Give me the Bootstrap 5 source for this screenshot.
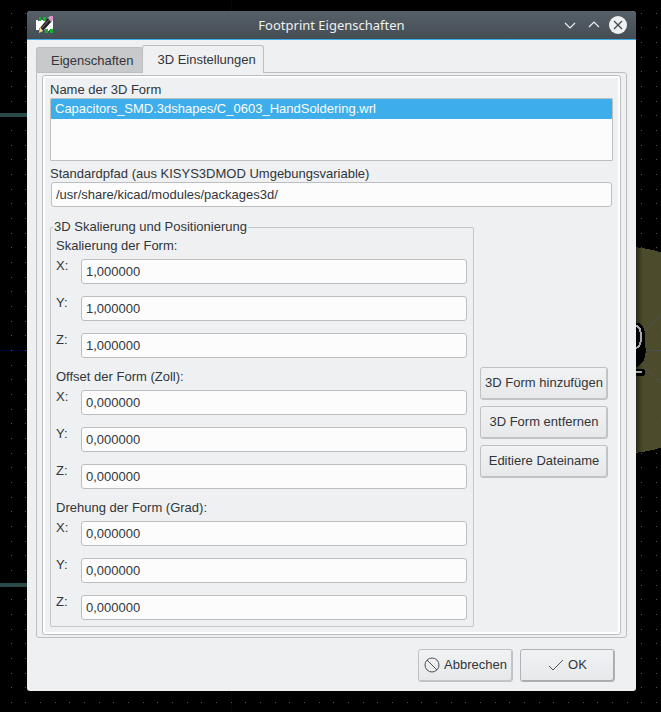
<!DOCTYPE html>
<html lang="de">
<head>
<meta charset="utf-8">
<meta name="viewport" content="width=device-width, initial-scale=1">
<title>Footprint Eigenschaften</title>
<link href="https://cdn.jsdelivr.net/npm/bootstrap@5.3.0/dist/css/bootstrap.min.css" rel="stylesheet">
<style>
  body { background: #000; color: #31363b; font: 13px/16px "Liberation Sans", Arial, sans-serif; padding: 11px 25px 21px 27px; position: relative; }
  .board { position: absolute; inset: 0; width: 100%; height: 100%; z-index: -1; }
  .dialog { background: #eff0f1; border-radius: 4px 4px 3px 3px; }
  .titlebar { height: 29px; background: linear-gradient(#566068, #454d54); border-bottom: 1px solid #3daee9; border-radius: 4px 4px 0 0; color: #eff0f1; padding: 0 8px; }
  .titlebar h1 { font: 13px/28px "Noto Sans", sans-serif; }
  .titlebar .side { width: 68px; }
  .titlebar button { background: none; border: 0; padding: 0; width: 20px; line-height: 0; color: inherit; }
  .dialog-body { padding: 5px 9px 9px; }
  .nav-tabs { --bs-nav-tabs-border-width: 0; align-items: flex-end; }
  .nav-tabs .nav-link { color: #31363b; border: 1px solid #bcbec0; border-bottom: 0; border-radius: 3px 3px 0 0; margin: 0; padding: 0 9px 0 14px; height: 25px; line-height: 25px; background: #c8c9ca; }
  .nav-tabs .nav-link.active { color: #31363b; background: #eff0f1; border-color: #bcbec0; height: 28px; line-height: 28px; margin: 0 0 -1px -1px; padding-right: 7px; position: relative; }
  .frame-outer { border: 1px solid #bcbec0; border-radius: 0 3px 3px 3px; padding: 2px 5px; }
  .frame-inner { border: 1px solid #bcbec0; border-radius: 3px; box-shadow: inset 0 0 0 2px #fff; padding: 6px 7px 7px; }
  .list-group { --bs-list-group-border-radius: 1px; height: 63px; border: 1px solid #bcbec0; background: #fcfcfc; margin-bottom: 5px; }
  .list-group-item { border: 0; padding: 0 4px; line-height: 20px; }
  .list-group-item.active { background: #3daee9; color: #fcfcfc; margin: 0; }
  .form-control { height: 25px; min-height: 0; padding: 0 4px; font-size: 13px; line-height: 16px; color: #31363b; background: #fcfcfc; border: 1px solid #bcbec0; border-radius: 3px; }
  .path-row { padding: 0 1px; }
  fieldset { border: 1px solid #c4c6c8; border-radius: 2px; padding: 2px 6px 6px 5px; min-width: 0; }
  fieldset.main-set > legend { float: none; width: auto; font-size: 13px; line-height: 16px; margin: 0 0 0 -3px; padding: 0 1px; }
  .axes { display: grid; gap: 12px; padding-top: 4px; }
  .axes label { width: 25px; line-height: 14px; flex-shrink: 0; }
  .group-title { line-height: 18px; }
  .axis-group + .axis-group { margin-top: 10px; }
  .side-actions { width: 128px; gap: 6px; margin: 0 5px 2px 6px; }
  .btn-dlg { height: 33px; padding: 0 4px; font-size: 13px; line-height: 16px; color: #31363b; background: linear-gradient(#f1f2f3, #e7e8e9); border: 1px solid #bfc1c2; border-radius: 3px; box-shadow: inset -1px -1px 0 #c3c4c6; white-space: nowrap; }
  .btn-ok { border-color: #b0b2b4; box-shadow: inset -1px -1px 0 #a8aaac; }
  .footer-actions { padding: 11px 12px 0; gap: 7px; }
  .footer-actions .btn-dlg { width: 95px; padding-bottom: 2px; }
</style>
</head>
<body>
<svg class="board" aria-hidden="true" shape-rendering="crispEdges">
  <defs>
    <pattern id="grid" x="11" y="13" width="44" height="44" patternUnits="userSpaceOnUse">
      <g fill="#555"><path d="M0 0h1v1h-1zM14 0h1v1h-1zM29 0h1v1h-1zM0 14h1v1h-1zM14 14h1v1h-1zM29 14h1v1h-1zM0 29h1v1h-1zM14 29h1v1h-1zM29 29h1v1h-1z"/></g>
    </pattern>
    <linearGradient id="shade"><stop offset="0" stop-opacity=".45"/><stop offset="1" stop-opacity="0"/></linearGradient>
  </defs>
  <path d="M231 0h1v712h-1zM0 350h661v1H0z" fill="#000038"/>
  <circle cx="628" cy="350" r="103" fill="#4c4c2c"/>
  <path d="M640 350h21M642 334l19-19M642 364l19 19" stroke="#4d4d56" fill="none"/>
  <rect width="100%" height="100%" fill="url(#grid)"/>
  <path d="M0 113h27v4H0zM0 583h27v4H0z" fill="#2a4a4a"/>
  <rect x="636" y="247" width="7" height="205" fill="url(#shade)"/>
  <path d="M634 323h5l4 3 2 7v12l1 6-2 9-6 7h-4z" fill="#000"/>
  <path d="M634 326h3l3 3 1 5v7l-2 5-4 3" stroke="#aaa" stroke-width="2" fill="none"/>
  <rect x="630" y="369" width="15" height="7" rx="3" fill="#000"/><path d="M630 371h12v2h-12z" fill="#aaa"/>
</svg>

<main class="dialog">
  <header class="titlebar d-flex align-items-center">
    <div class="side">
      <svg width="20" height="20" viewBox="0 0 20 20" class="d-block" aria-hidden="true">
        <path d="M1 5h2v1h3V5h12v10h-4v1h-3v-1H8v1H5v-1H1z" fill="#fff"/>
        <path d="M4 2h2v4H4zM8 2h3v4H8zM12 2h3v3h-3zM10 14h3v4h-3zM15 14h3v4h-3zM4 13h2v4H4z" fill="#13b52c"/>
        <path d="M5 13L13 3l4 3-9 10z" fill="#222"/><path d="M7 13l8-9" stroke="#777"/>
        <path d="M13 3l2-2h3v4l-2 2z" fill="#d79ace"/><path d="M5 12l3 4-4 2z" fill="#f0dd88"/>
      </svg>
    </div>
    <h1 class="flex-grow-1 text-center m-0">Footprint Eigenschaften</h1>
    <div class="side d-flex align-items-center justify-content-end gap-1">
      <button type="button" aria-label="Minimieren"><svg width="16" height="16" fill="none" stroke="currentColor" stroke-width="1.2"><path d="M3 6l5 5 5-5"/></svg></button>
      <button type="button" aria-label="Maximieren"><svg width="16" height="16" fill="none" stroke="currentColor" stroke-width="1.2"><path d="M3 10l5-5 5 5"/></svg></button>
      <button type="button" aria-label="Schließen"><svg width="20" height="20" viewBox="0 0 20 20"><circle cx="10" cy="10" r="9" fill="#eff0f1"/><path d="M6 6l8 8M14 6l-8 8" stroke="#3f474e" stroke-width="1.2"/></svg></button>
    </div>
  </header>

  <div class="dialog-body">
    <div class="nav nav-tabs" role="tablist">
      <button type="button" class="nav-link" role="tab" aria-selected="false">Eigenschaften</button>
      <button type="button" class="nav-link active" role="tab" aria-selected="true">3D Einstellungen</button>
    </div>
    <section class="frame-outer" role="tabpanel">
      <div class="frame-inner">
        <div id="shape-label">Name der 3D Form</div>
        <div class="list-group" aria-labelledby="shape-label">
          <button type="button" class="list-group-item list-group-item-action active">Capacitors_SMD.3dshapes/C_0603_HandSoldering.wrl</button>
        </div>
        <label class="d-block" for="path">Standardpfad (aus KISYS3DMOD Umgebungsvariable)</label>
        <div class="path-row"><input id="path" class="form-control" value="/usr/share/kicad/modules/packages3d/"></div>

        <div class="d-flex mt-2 pt-1">
          <fieldset class="main-set flex-grow-1">
            <legend>3D Skalierung und Positionierung</legend>
            <div class="axis-group" role="group" aria-labelledby="g1">
              <div class="group-title" id="g1">Skalierung der Form:</div>
              <div class="axes">
                <div class="d-flex"><label for="sx">X:</label><input id="sx" class="form-control" value="1,000000"></div>
                <div class="d-flex"><label for="sy">Y:</label><input id="sy" class="form-control" value="1,000000"></div>
                <div class="d-flex"><label for="sz">Z:</label><input id="sz" class="form-control" value="1,000000"></div>
              </div>
            </div>
            <div class="axis-group" role="group" aria-labelledby="g2">
              <div class="group-title" id="g2">Offset der Form (Zoll):</div>
              <div class="axes">
                <div class="d-flex"><label for="ox">X:</label><input id="ox" class="form-control" value="0,000000"></div>
                <div class="d-flex"><label for="oy">Y:</label><input id="oy" class="form-control" value="0,000000"></div>
                <div class="d-flex"><label for="oz">Z:</label><input id="oz" class="form-control" value="0,000000"></div>
              </div>
            </div>
            <div class="axis-group" role="group" aria-labelledby="g3">
              <div class="group-title" id="g3">Drehung der Form (Grad):</div>
              <div class="axes">
                <div class="d-flex"><label for="rx">X:</label><input id="rx" class="form-control" value="0,000000"></div>
                <div class="d-flex"><label for="ry">Y:</label><input id="ry" class="form-control" value="0,000000"></div>
                <div class="d-flex"><label for="rz">Z:</label><input id="rz" class="form-control" value="0,000000"></div>
              </div>
            </div>
          </fieldset>
          <div class="side-actions d-flex flex-column justify-content-center flex-shrink-0">
            <button type="button" class="btn btn-dlg">3D Form hinzufügen</button>
            <button type="button" class="btn btn-dlg">3D Form entfernen</button>
            <button type="button" class="btn btn-dlg">Editiere Dateiname</button>
          </div>
        </div>
      </div>
    </section>
    <footer class="footer-actions d-flex justify-content-end">
      <button type="button" class="btn btn-dlg d-flex align-items-center justify-content-center gap-1"><svg width="16" height="16" fill="none" stroke="#4d5256" aria-hidden="true"><circle cx="8" cy="8" r="7"/><path d="M3 3l10 10"/></svg>Abbrechen</button>
      <button type="button" class="btn btn-dlg btn-ok d-flex align-items-center justify-content-center gap-1"><svg width="16" height="16" fill="none" stroke="#4d5256" aria-hidden="true"><path d="M1 9l4 4L15 3"/></svg>OK</button>
    </footer>
  </div>
</main>
<script src="https://cdn.jsdelivr.net/npm/bootstrap@5.3.0/dist/js/bootstrap.bundle.min.js"></script>
</body>
</html>
